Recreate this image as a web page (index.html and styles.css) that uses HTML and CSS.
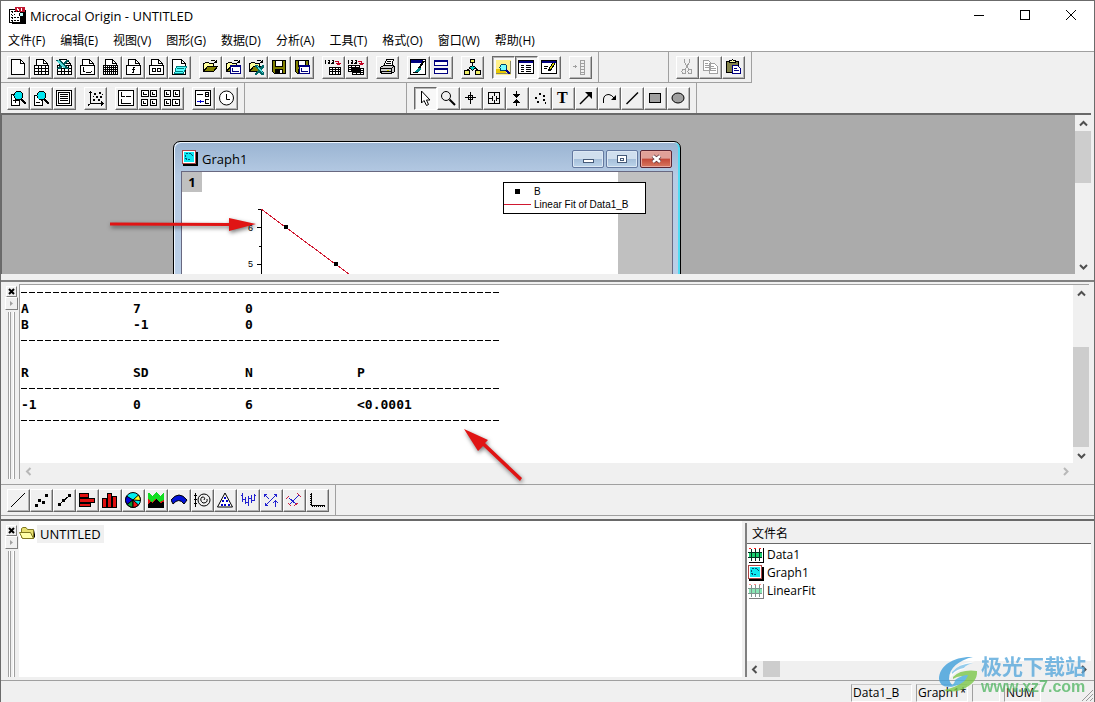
FILE: index.html
```html
<!DOCTYPE html>
<html lang="zh-CN">
<head>
<meta charset="utf-8">
<title>Microcal Origin - UNTITLED</title>
<link rel="stylesheet" href="styles.css">
</head>
<body>
<svg class="defs" aria-hidden="true">
  <symbol id="page" viewBox="0 0 17 17"><path fill="#fff" d="M3.500 8V.5H10.500L14.500 4.500V8"/><path d="M10.500 .5V4.500H14.500"/></symbol>
  <symbol id="grid" viewBox="0 0 17 17"><path fill="#fff" d="M1.500 6.500H15.500V15.500H1.500ZM1 9.500H16M1 12.500H16M5.500 6V16M8.500 6V16M12.500 6V16"/></symbol>
  <symbol id="frame" viewBox="0 0 17 17"><path fill="#fff" d="M1.500 6.500H15.500V15.500H1.500Z"/></symbol>
  <symbol id="folder" viewBox="0 0 17 17"><path fill="#ffff9c" d="M1.500 12.500V4.500H2.500L3.500 3.500H6.500L7.500 4.500H11.500V7.500H5.500Z"/><path fill="#808000" d="M1.500 12.500L5.500 7.500H15.500L11.500 12.500Z"/><path d="M9 1.500H12.500L14.500 3.500M14.500 1V4M12 3.500H15"/></symbol>
  <symbol id="disk" viewBox="0 0 17 17"><path fill="#808000" d="M1.500 1.500H14.500V14.500H3.500L1.500 12.500Z"/><path fill="#fff" d="M4.500 1.500H11.500V7.500H4.500Z"/><path fill="#000" d="M4.500 10.500H11.500V14.500H4.500Z"/><path class="n" fill="#fff" d="M9 11h2v3h-2z"/></symbol>
  <symbol id="miniplot" viewBox="0 0 17 17"><path fill="#fff" stroke="#000080" d="M5.500 6.500H15.500V14.500H5.500ZM5 7.500H16"/><path stroke="#000080" d="M7.500 9V12.500H14"/></symbol>
  <symbol id="excel" viewBox="0 0 17 17"><path class="n" fill="#005858" d="M0 1h5l2 3 3-3h3l-4 5 4 4H9L7 7 4 10H0l4-4z"/><path stroke="#5dd" stroke-width="2" d="M2 2L9 9"/></symbol>
  <symbol id="lens" viewBox="0 0 17 17"><path stroke-width="2.500" d="M11 9L16 14"/><circle fill="#00e5f0" cx="8.500" cy="5.500" r="4.500"/></symbol>
  <symbol id="table" viewBox="0 0 17 17"><path class="n" fill="#fff" d="M0 0h15v15H0z"/><path stroke="#f22" stroke-dasharray="2 3" d="M1 1.500H14"/><path class="n" fill="#18d070" d="M1 6h13v4H1z"/><path d="M0 5.500H14M0 10.500H14M3.500 2V14M7.500 2V14M11.500 2V14" stroke="#003020"/><path d="M1 15.500H15.500V1"/></symbol>
  <symbol id="plot" viewBox="0 0 17 17"><path class="n" d="M1 2h15v14H1z" fill="#000"/><path fill="#fff" stroke="#a44" d="M.5 .5H13.500V13.500H.5Z"/><path class="n" fill="#10e8f0" d="M2 2h10v10H2z"/><path stroke="#057" stroke-dasharray="2 1" d="M4 3.500H9L11.500 6.500M3.500 5V8L5 9.500H9"/></symbol>
</svg>
<div class="window">
  <header class="titlebar">
    <svg class="i" viewBox="0 0 17 17"><path class="n" fill="#000" d="M3 3h14v14H3z"/><path fill="#fff" d="M.5 2.500H11.500V15.500H.5Z"/><path class="n" fill="#c01830" d="M6 0h10v5H6z"/><path stroke="#fff" d="M8 1L10 4M12 1V4"/><path stroke-dasharray="2 1" d="M2 4.500H10M2 10.500H10M2 13.500H11"/><path stroke-dasharray="1 2" d="M2 7.500H8M3.500 5V15"/><circle fill="#bff" cx="12.500" cy="7.500" r="2"/></svg>
    <h1>Microcal Origin - UNTITLED</h1>
    <div class="caption">
      <button aria-label="最小化"><svg class="i" viewBox="0 0 17 17"><path d="M3 8.500H13"/></svg></button>
      <button aria-label="最大化"><svg class="i" viewBox="0 0 17 17"><path d="M3.500 3.500H12.500V12.500H3.500Z"/></svg></button>
      <button aria-label="关闭"><svg class="i smooth" viewBox="0 0 17 17"><path d="M3 3L13 13M13 3L3 13"/></svg></button>
    </div>
  </header>
  <nav class="menu">
    <button>文件(F)</button><button>编辑(E)</button><button>视图(V)</button><button>图形(G)</button><button>数据(D)</button><button>分析(A)</button><button>工具(T)</button><button>格式(O)</button><button>窗口(W)</button><button>帮助(H)</button>
  </nav>

  <div class="bars">
    <div class="bar lined">
      <div class="group">
        <button class="tb" aria-label="New"><svg class="i" viewBox="0 0 17 17"><path fill="#fff" d="M1.500 .5H10.500L14.500 4.500V15.500H1.500Z"/><path d="M10.500 .5V4.500H14.500"/></svg></button>
        <button class="tb" aria-label="New worksheet"><svg class="i"><use href="#page"/><use href="#grid"/></svg></button>
        <button class="tb" aria-label="New Excel"><svg class="i"><use href="#page"/><use href="#grid"/><use href="#excel"/></svg></button>
        <button class="tb" aria-label="New graph"><svg class="i"><use href="#page"/><use href="#frame"/><path d="M4.500 8V12.500H6M7 13.500H12M12.500 12V13"/></svg></button>
        <button class="tb" aria-label="New matrix"><svg class="i"><use href="#page"/><path fill="#fff" d="M1.500 6.500H15.500V15.500H1.500ZM3.500 6V16M5.500 6V16M7.500 6V16M9.500 6V16M11.500 6V16M13.500 6V16M1 8.500H16M1 10.500H16M1 12.500H16"/></svg></button>
        <button class="tb" aria-label="New function"><svg class="i"><use href="#page"/><use href="#frame"/><path d="M10 8.500H8.500V13.500H7M7 10.500H10"/></svg></button>
        <button class="tb" aria-label="New layout"><svg class="i"><use href="#page"/><use href="#frame"/><path d="M4.500 9.500H7.500V12.500H4.500ZM9.500 9.500H12.500V12.500H9.500Z"/></svg></button>
        <button class="tb" aria-label="New notes"><svg class="i"><path fill="#fff" d="M1.500 .5H10.500L14.500 4.500V15.500H1.500Z"/><path d="M10.500 .5V4.500H14.500"/><path fill="#5ff" stroke="#008080" d="M5.500 7.500H15.500L12.500 14.500H3.500ZM6 9.500H13M5 12.500H12"/></svg></button>
        <i class="gap"></i>
        <button class="tb" aria-label="Open"><svg class="i"><use href="#folder"/></svg></button>
        <button class="tb" aria-label="Open template"><svg class="i"><use href="#folder"/><use href="#miniplot"/></svg></button>
        <button class="tb" aria-label="Open Excel"><svg class="i"><use href="#folder"/><path class="n" fill="#006868" d="M7 6h3l2 3 2-3h2v2l-3 3 3 3v2h-3l-2-3-2 3H7v-2l3-3-3-3z"/><path stroke="#5dd" d="M9 7L15 14"/></svg></button>
        <button class="tb" aria-label="Save"><svg class="i"><use href="#disk"/></svg></button>
        <button class="tb" aria-label="Save template"><svg class="i"><use href="#disk"/><use href="#miniplot"/></svg></button>
        <i class="gap"></i>
        <button class="tb" aria-label="Import ASCII"><svg class="i" viewBox="0 0 17 17"><path d="M.5 1V5M2.500 1.500H5M4.500 1V3.500H3V5M3 4.500H5M6.500 1.500H8.500V4.500H6M7 3.500H8"/><path fill="#fff" d="M4.500 8.500H15.500V15.500H4.500ZM4 10.500H16M4 12.500H16M7.500 8V16M10.500 8V16M13.500 8V16"/><path stroke="#c00020" d="M10 2.500H13.500V6M11 4.500H16M12 5.500H15"/></svg></button>
        <button class="tb" aria-label="Import multiple"><svg class="i" viewBox="0 0 17 17"><path d="M.5 1V5M2.500 1.500H5M4.500 1V3.500H3V5M3 4.500H5M6.500 1.500H8.500V4.500H6M7 3.500H8"/><path fill="#fff" d="M.5 6.500H11.500V12.500H.5ZM0 8.500H12M0 10.500H12M3.500 6V13M7.500 6V13M4.500 9.500H15.500V15.500H4.500ZM4 11.500H16M4 13.500H16M8.500 9V16M12.500 9V16"/><path stroke="#c00020" d="M10 2.500H13.500V6M11 4.500H16M12 5.500H15"/></svg></button>
        <i class="gap"></i>
        <button class="tb" aria-label="Print"><svg class="i" viewBox="0 0 17 17"><path fill="#fff" d="M4.500 7.500L7.500 .5H14.500L12.500 7.500"/><path d="M8 2.500H12M7 4.500H12"/><path fill="#ccc" d="M1.500 8.500L4.500 6.500H14.500L15.500 8.500V12.500L12.500 14.500H2.500L1.500 12.500Z"/><path d="M2 9.500H12L15 7.500M12.500 9V14M2 12.500H12"/><path stroke="#cc0" d="M8 11.500H10"/></svg></button>
        <i class="gap"></i>
        <button class="tb" aria-label="Refresh"><svg class="i" viewBox="0 0 17 17"><path fill="#fff" d="M.5 .5H15.500V15.500H.5Z"/><path class="n" fill="#000080" d="M1 1h12v3H1z"/><path class="n" fill="#088" d="M5 14l1-3 3-3 2 2-2 3z"/><path stroke-width="2" d="M9 9L14 2"/><path d="M3 13.500H8"/></svg></button>
        <button class="tb" aria-label="Duplicate"><svg class="i" viewBox="0 0 17 17"><path fill="#fff" stroke="#000080" d="M1.500 1.500H14.500V6.500H1.500ZM1 2.500H15M1.500 9.500H14.500V14.500H1.500ZM1 10.500H15"/></svg></button>
        <i class="gap"></i>
        <button class="tb" aria-label="Project explorer"><svg class="i" viewBox="0 0 17 17"><path d="M8.500 4V7L3.500 11M8.500 7L14 11M8.500 7V12"/><path fill="#ee6" d="M6.500 .5H10.500V3.500H6.500ZM.5 11.500H5.500V15.500H.5ZM11.500 11.500H16.500V15.500H11.500Z"/><path fill="#0cc" d="M8.500 6.500L11.500 8.500 8.500 11.500 5.500 8.500Z"/></svg></button>
        <i class="gap"></i>
        <button class="tb on" aria-label="Results log"><svg class="i" viewBox="0 0 17 17"><path class="n" fill="#fff08a" d="M1 1h15v15H1z"/><path class="n" fill="#e8c800" d="M1 10h10v4H1z"/><path d="M1 14.500H15.500V2" stroke="#886"/><circle fill="#7ff" stroke="#046" cx="8.500" cy="8.500" r="3.500"/><path stroke-width="2" stroke="#000080" d="M11 11L15 15"/></svg></button>
        <button class="tb on" aria-label="Script window"><svg class="i" viewBox="0 0 17 17"><path fill="#fff" d="M.5 1.500H15.500V14.500H.5Z"/><path class="n" fill="#000080" d="M1 2h14v2H1z"/><path d="M3 6.500H6M8 6.500H13M3 8.500H6M8 8.500H13M3 10.500H6M8 10.500H13M3 12.500H6M8 12.500H13"/></svg></button>
        <button class="tb" aria-label="Code editor"><svg class="i" viewBox="0 0 17 17"><path fill="#fff" d="M.5 1.500H15.500V14.500H.5Z"/><path class="n" fill="#000080" d="M1 2h14v2H1z"/><path d="M3 7.500H7M3 9.500H6"/><path stroke-width="3" d="M8 12L13 4"/><path stroke="#dd0" d="M9 10L13 4"/></svg></button>
        <i class="gap"></i>
        <button class="tb" aria-label="Add column" disabled><svg class="i dim" viewBox="0 0 17 17"><path d="M1 7.500H5M3.500 6V9M8.500 1.500H12.500V15.500H8.500ZM8 4.500H13M8 7.500H13M8 10.500H13M8 13.500H13"/></svg></button>
      </div>
      <div class="group apart-wide">
        <button class="tb" aria-label="Cut" disabled><svg class="i dim" viewBox="0 0 17 17"><path d="M5.500 0V3L9.500 10M10.500 0V3L6.500 10"/><circle cx="5" cy="12.500" r="2"/><circle cx="11" cy="12.500" r="2"/></svg></button>
        <button class="tb" aria-label="Copy" disabled><svg class="i dim" viewBox="0 0 17 17"><path fill="#fff" d="M1.500 1.500H6.500L8.500 3.500V11.500H1.500ZM3 4.500H6M3 6.500H7M3 8.500H7M7.500 4.500H12.500L15.500 7.500V14.500H7.500ZM9 7.500H12M9 9.500H14M9 11.500H14"/></svg></button>
        <button class="tb" aria-label="Paste"><svg class="i" viewBox="0 0 17 17"><path fill="#84844a" d="M1.500 2.500H13.500V13.500H1.500Z"/><path fill="#ffa" d="M4.500 3.500V1.500H6.500L7.500 .5 8.500 1.500H10.500V3.500Z"/><path fill="#fff" stroke="#000080" d="M7.500 6.500H12.500L15.500 9.500V14.500H7.500ZM9 9.500H12M9 11.500H14"/></svg></button>
      </div>
    </div>
    <div class="bar">
      <div class="group">
        <button class="tb" aria-label="Zoom in"><svg class="i"><path fill="#fff" d="M1.500 4.500H9.500V15.500H1.500Z"/><use href="#lens"/><path d="M3 10.500H8M5.500 8V13"/></svg></button>
        <button class="tb" aria-label="Zoom out"><svg class="i"><path fill="#fff" d="M1.500 5.500H9.500V15.500H1.500ZM3 12.500H7"/><use href="#lens"/></svg></button>
        <button class="tb" aria-label="Whole page"><svg class="i" viewBox="0 0 17 17"><path fill="#fff" d="M.5 .5H15.500V15.500H.5Z"/><path d="M2.500 2.500H13.500V13.500H2.500ZM4 4.500H12M4 6.500H12M4 8.500H12M4 10.500H12"/></svg></button>
        <i class="gap"></i>
        <button class="tb" aria-label="Rescale"><svg class="i" viewBox="0 0 17 17"><path d="M3.500 1V13.500H16M1.500 3.500L3.500 1.500 5.500 3.500M14 11.500L16 13.500 14 15.500M1 15.500L4 13"/><path class="n" fill="#000" d="M7 3h2v2H7zM12 2h2v2h-2zM9 6h2v2H9zM13 6h2v2h-2zM6 9h2v2H6zM11 9h2v2h-2zM15 4h1v1h-1zM6 6h1v1H6z"/></svg></button>
        <i class="gap"></i>
        <button class="tb" aria-label="Two layers"><svg class="i" viewBox="0 0 17 17"><path fill="#fff" d="M.5 .5H15.500V15.500H.5Z"/><path d="M3.500 2V6.500H7M8 6.500H13M3.500 9V13.500H13"/></svg></button>
        <button class="tb" aria-label="Four layers"><svg class="i" viewBox="0 0 17 17"><path fill="#fff" d="M.5 .5H7.500V6.500H.5ZM9.500 .5H15.500V6.500H9.500ZM.5 9.500H6.500V15.500H.5ZM9.500 9.500H15.500V15.500H9.500Z"/><path d="M2.500 2V4.500H6M11.500 2V4.500H14M2.500 11V13.500H5M11.500 11V13.500H14"/></svg></button>
        <button class="tb" aria-label="Extract layers"><svg class="i" viewBox="0 0 17 17"><path fill="#fff" d="M.5 .5H6.500V6.500H.5ZM9.500 .5H15.500V6.500H9.500ZM.5 9.500H6.500V15.500H.5ZM8.500 9.500H15.500V15.500H8.500Z"/><path d="M2.500 2V4.500H5M11.500 2V4.500H14M2.500 11V13.500H5M11.500 11V13.500H14"/></svg></button>
        <i class="gap"></i>
        <button class="tb" aria-label="New legend"><svg class="i" viewBox="0 0 17 17"><path fill="#fff" d="M.5 .5H15.500V15.500H.5Z"/><path d="M2 4.500H8M10.500 2V6.500H13.500V2.500H10M10 4.500H14M14 9.500H10.500V13.500H14"/><path stroke="#00c" d="M2 11.500H9M5.500 10V13"/></svg></button>
        <button class="tb" aria-label="Date and time"><svg class="i smooth" viewBox="0 0 17 17"><circle fill="#fff" cx="8.500" cy="8" r="7"/><path d="M8.500 4V9.500H12"/></svg></button>
      </div>
      <div class="group apart-tools">
        <button class="tb on" aria-label="Pointer"><svg class="i smooth" viewBox="0 0 17 17"><path fill="#fff" d="M4.500 1V13L7 10.500 9.500 15.500 11.500 14.500 9.500 10H13Z"/></svg></button>
        <button class="tb" aria-label="Zoom"><svg class="i smooth" viewBox="0 0 17 17"><circle cx="6" cy="6" r="4.500"/><path stroke-width="2" d="M9.500 9.500L15 15"/></svg></button>
        <button class="tb" aria-label="Screen reader"><svg class="i" viewBox="0 0 17 17"><path d="M2 7.500H13M7.500 2V14M5.500 5.500H9.500V9.500H5.500Z"/></svg></button>
        <button class="tb" aria-label="Data reader"><svg class="i" viewBox="0 0 17 17"><path d="M2.500 2.500H13.500V13.500H2.500ZM2 8.500H6M10 8.500H14M8.500 3V6M8.500 10V14M6.500 6V11M10.500 6V11"/></svg></button>
        <button class="tb" aria-label="Data selector"><svg class="i" viewBox="0 0 17 17"><path class="n" fill="#000" d="M4 4h7L7.500 8zM4 13h7L7.500 9z"/><path d="M7.500 1V5M7.500 12V16"/></svg></button>
        <button class="tb" aria-label="Draw data"><svg class="i" viewBox="0 0 17 17"><path class="n" fill="#000" d="M7 3h2v2H7zM3 7h2v2H3zM5 11h2v2H5zM11 5h2v2h-2zM11 9h2v2h-2zM13 12h1v2h-1z"/></svg></button>
        <button class="tb" aria-label="Text"><svg class="i" viewBox="0 0 17 17"><text class="tool-letter" x="2" y="13">T</text></svg></button>
        <button class="tb" aria-label="Arrow"><svg class="i smooth" viewBox="0 0 17 17"><path stroke-width="1.500" d="M2 14L11 5"/><path class="n" fill="#000" d="M7 2h7v7z"/></svg></button>
        <button class="tb" aria-label="Curved arrow"><svg class="i smooth" viewBox="0 0 17 17"><path d="M2.500 13V9Q3 4.500 8 4.500Q11 5 13 8"/><path class="n" fill="#000" d="M15 5v5h-5z"/></svg></button>
        <button class="tb" aria-label="Line"><svg class="i smooth" viewBox="0 0 17 17"><path stroke-width="1.500" d="M2.500 14L14 2.500"/></svg></button>
        <button class="tb" aria-label="Rectangle"><svg class="i" viewBox="0 0 17 17"><path fill="#a0a0a0" d="M2.500 3.500H13.500V12.500H2.500Z"/></svg></button>
        <button class="tb" aria-label="Circle"><svg class="i smooth" viewBox="0 0 17 17"><ellipse fill="#a0a0a0" cx="8" cy="8" rx="6" ry="5"/></svg></button>
      </div>
    </div>
  </div>

  <main class="workspace">
    <div class="canvas">
      <section class="graph">
        <header class="graph-title">
          <svg class="i"><use href="#plot"/></svg>
          <h2>Graph1</h2>
          <button class="aero" aria-label="Minimize graph"><svg class="i" viewBox="0 0 17 17"><path fill="#fff" stroke="#455a78" d="M3.500 8.500H13.500V11.500H3.500Z"/></svg></button>
          <button class="aero" aria-label="Maximize graph"><svg class="i" viewBox="0 0 17 17"><path fill="#fff" stroke="#455a78" d="M3.500 4.500H12.500V11.500H3.500ZM6.500 7.500H9.500V9.500H6.500Z"/></svg></button>
          <button class="aero red" aria-label="Close graph"><svg class="i smooth" viewBox="0 0 17 17"><path stroke="#5b3038" stroke-width="4" d="M5 5L12 11M12 5L5 11"/><path stroke="#fff" stroke-width="2.500" d="M5 5L12 11M12 5L5 11"/></svg></button>
        </header>
        <div class="graph-body">
          <div class="sheet">
            <span class="layer">1</span>
            <svg class="chart" viewBox="0 0 437 160" width="437" height="160"><path class="axis" d="M79.500 37V160M76 37.500H79M75 55.500H79M77 74.500H79M75 92.500H79"/><path class="fit" d="M79 37L179 111"/><path class="dots" d="M102 53h4v4h-4zM152 90h4v4h-4z"/><text x="66" y="59">6</text><text x="66" y="95">5</text></svg>
          </div>
          <div class="legend">
            <i class="key dot"></i><span>B</span>
            <i class="key line"></i><span>Linear Fit of Data1_B</span>
          </div>
        </div>
      </section>
      <svg class="callout first" viewBox="0 0 160 30"><path d="M3 11.500L122 12V7L149 13 122 20V15L3 14.500Z"/></svg>
    </div>
    <div class="vscroll">
      <button aria-label="Up"><svg viewBox="0 0 9 9"><path d="M1 6.500L4.500 3 8 6.500"/></svg></button><i class="thumb short"></i><i class="space"></i><button aria-label="Down"><svg viewBox="0 0 9 9"><path d="M1 3L4.500 6.500 8 3"/></svg></button>
    </div>
  </main>

  <section class="log dock">
    <div class="grip"><button class="x" aria-label="Close log"><svg viewBox="0 0 9 9"><path d="M2 2L7 7M7 2L2 7"/></svg></button><button class="pin" aria-label="Expand log"><svg viewBox="0 0 9 9"><path class="tri" d="M3 2L6 4.500 3 7Z"/></svg></button><i class="rails"></i></div>
    <div class="log-view">
      <div class="log-main">
        <div class="results">
          <hr>
          <table>
            <tr><td>A</td><td>7</td><td>0</td><td></td></tr>
            <tr><td>B</td><td>-1</td><td>0</td><td></td></tr>
          </table>
          <hr>
          <br>
          <table><tr><td>R</td><td>SD</td><td>N</td><td>P</td></tr></table>
          <hr>
          <table><tr><td>-1</td><td>0</td><td>6</td><td>&lt;0.0001</td></tr></table>
          <hr>
        </div>
        <div class="vscroll">
          <button aria-label="Up"><svg viewBox="0 0 9 9"><path d="M1 6.500L4.500 3 8 6.500"/></svg></button><i class="space upper"></i><i class="thumb tall"></i><button aria-label="Down"><svg viewBox="0 0 9 9"><path d="M1 3L4.500 6.500 8 3"/></svg></button>
        </div>
      </div>
      <div class="hscroll off"><button aria-label="Left"><svg viewBox="0 0 9 9"><path d="M6.500 1L3 4.500 6.500 8"/></svg></button><i class="space"></i><button aria-label="Right"><svg viewBox="0 0 9 9"><path d="M3 1L6.500 4.500 3 8"/></svg></button><i class="corner"></i></div>
    </div>
    <svg class="callout second" viewBox="0 0 70 64"><path d="M3 3L27 14 24 17 61 52 59 55 22 20 17 25Z"/></svg>
  </section>

  <div class="plots">
    <div class="group">
      <button class="tb" aria-label="Line plot"><svg class="i smooth" viewBox="0 0 17 17"><path d="M1 15L15 1"/></svg></button>
      <button class="tb" aria-label="Scatter"><svg class="i" viewBox="0 0 17 17"><path class="n" fill="#000" d="M2 12h3v3H2zM5 7h3v3H5zM9 9h3v3H9zM12 2h3v3h-3z"/></svg></button>
      <button class="tb" aria-label="Line and symbol"><svg class="i" viewBox="0 0 17 17"><path d="M3 13L14 3"/><path class="n" fill="#000" d="M2 11h3v3H2zM6 7h3v3H6zM12 2h3v3h-3z"/></svg></button>
      <button class="tb" aria-label="Bar"><svg class="i" viewBox="0 0 17 17"><path fill="#e01010" d="M.5 1.500H9.500V5.500H.5ZM.5 6.500H15.500V10.500H.5ZM.5 11.500H11.500V14.500H.5Z"/></svg></button>
      <button class="tb" aria-label="Column"><svg class="i" viewBox="0 0 17 17"><path fill="#e01010" d="M.5 6.500H4.500V15.500H.5ZM5.500 1.500H9.500V15.500H5.500ZM10.500 4.500H14.500V15.500H10.500Z"/></svg></button>
      <button class="tb" aria-label="Pie"><svg class="i smooth" viewBox="0 0 17 17"><circle fill="#0ee" cx="8" cy="8" r="7.500"/><path fill="#00d" d="M8 8L1.500 4Q-1 9 2 12.500Z"/><path fill="#093" d="M8 8L2 12.500Q5 15.500 8 15.500Z"/><path fill="#e11" d="M8 8V15.500Q11 15.500 13.500 13Z"/><path fill="#ff2" d="M8 8L13.500 3Q15.500 6 15.500 8.500Z"/></svg></button>
      <button class="tb" aria-label="Area"><svg class="i" viewBox="0 0 17 17"><path class="n" fill="#e01010" d="M0 5h16v11H0z"/><path class="n" fill="#f0f0f0" d="M0 0h16v4H0z"/><path class="n" fill="#1d2" d="M0 1l1 0 3 3 4-4 4 4 3-3h1v7l-4 2-4-3-4 3-4-3z"/><path class="n" fill="#000" d="M0 12l3-2 2 1 3-4 4 4 4-1v6H0z"/></svg></button>
      <button class="tb" aria-label="Fill area"><svg class="i smooth" viewBox="0 0 17 17"><path fill="#0010d8" d="M0 8Q8-2 16 8L13 12Q8 5 2 12Z"/></svg></button>
      <button class="tb" aria-label="Polar"><svg class="i smooth" viewBox="0 0 17 17"><path d="M1.500 1V15M0 3.500H3M0 7.500H3M0 11.500H3"/><circle cx="10" cy="8" r="6"/><path d="M10 8Q12 5 8 5Q5 8 9 11Q14 11 13 7"/></svg></button>
      <button class="tb" aria-label="Ternary"><svg class="i smooth" viewBox="0 0 17 17"><path fill="#fff" d="M8 1L15.500 15H.5Z"/><path class="n" fill="#00c" d="M7 5h2v2H7zM5 8h2v2H5zM9 8h2v2H9zM4 12h2v2H4zM7 12h2v2H7zM11 12h2v2h-2z"/></svg></button>
      <button class="tb" aria-label="High low close"><svg class="i" viewBox="0 0 17 17"><path stroke="#2020d0" d="M2.500 1V10M1 3.500H3M5.500 5V12M3 7.500H5M8.500 4V14M6 10.500H8M11.500 3V11M9 6.500H11M14.500 2V9M12 8.500H14M15 3.500H16"/></svg></button>
      <button class="tb" aria-label="Vector"><svg class="i" viewBox="0 0 17 17"><path stroke="#2020d0" d="M1 2L6 7M1.500 2V5M1 2.500H4M14 2L2 14M14 2.500H11M13.500 2V5M2.500 14V11M2 13.500H5M12.500 15V9M10 11L12.500 9L15 11"/></svg></button>
      <button class="tb" aria-label="Vector XYXY"><svg class="i" viewBox="0 0 17 17"><path stroke="#2020d0" d="M3 13L13 3M3 6L10 12"/><path stroke="#d02040" d="M0 7L3 4M8 14L12 11M2 11L5 14M11 1L15 5"/></svg></button>
      <button class="tb" aria-label="Template"><svg class="i" viewBox="0 0 17 17"><path d="M2.500 1V13.500H16"/><path stroke-dasharray="1 1" d="M3 14.500H16M1.500 2V14"/></svg></button>
    </div>
  </div>

  <section class="project dock">
    <div class="grip"><button class="x" aria-label="Close explorer"><svg viewBox="0 0 9 9"><path d="M2 2L7 7M7 2L2 7"/></svg></button><button class="pin" aria-label="Expand explorer"><svg viewBox="0 0 9 9"><path class="tri" d="M3 2L6 4.500 3 7Z"/></svg></button><i class="rails"></i></div>
    <div class="tree">
      <svg class="i smooth" viewBox="0 0 17 17"><path class="n" fill="#000" d="M3 14H14L16 12V5L14 14Z"/><path fill="#e8e070" stroke="#807820" d="M2.500 12.500V3.500L4 2.500H7L8.500 4.500H14.500V13.500H4Z"/><path fill="#ffffa8" stroke="#807820" d="M3.500 13.500L.5 7.500H11.500L14.500 13.500Z"/></svg>
      <span>UNTITLED</span>
    </div>
    <div class="files">
      <div class="files-head">文件名</div>
      <ul>
        <li><svg class="i"><use href="#table"/></svg>Data1</li>
        <li><svg class="i"><use href="#plot"/></svg>Graph1</li>
        <li><svg class="i faded"><use href="#table"/></svg>LinearFit</li>
      </ul>
      <div class="hscroll"><button aria-label="Left"><svg viewBox="0 0 9 9"><path d="M6.500 1L3 4.500 6.500 8"/></svg></button><i class="thumb"></i><i class="space"></i><button aria-label="Right"><svg viewBox="0 0 9 9"><path d="M3 1L6.500 4.500 3 8"/></svg></button></div>
    </div>
  </section>

  <footer class="status">
    <span class="s-data">Data1_B</span><span class="s-graph">Graph1*</span><span class="s-blank"></span><span class="s-num">NUM</span>
    <svg class="i smooth" viewBox="0 0 17 17"><path stroke="#999" d="M5 16L16 5M9 16L16 9M13 16L16 13"/></svg>
  </footer>

  <div class="watermark">
    <svg viewBox="0 0 44 38"><path fill="#3f9fdc" d="M2 24C2 10 18 1 36 2C22 5 12 13 12 24Q13 29 17 31Q3 34 2 24Z"/><path fill="#fff" d="M13 20Q20 8 38 6Q30 9 27 14Q20 15 13 23Z"/><path fill="#7fc4ec" d="M15 17Q21 9 36 8Q29 10 27 13Q20 14 15 19Z"/><path fill="#7cc84a" d="M16 22Q24 14 40 16Q41 28 24 35Q14 38 6 35Q24 32 28 22Q22 20 16 24Z"/><path fill="#4aaee0" d="M18 25Q25 20 31 20Q28 30 12 32Q18 29 18 25Z"/></svg>
    <div><b>极光下载站</b><em>www.xz7.com</em></div>
  </div>
</div>
</body>
</html>
```
FILE: styles.css
```css
* { box-sizing: border-box; }
body {
  margin: 0;
  background: #f0f0f0;
  color: #000;
  font: 13px/18px "Open Sans", "Noto Sans CJK SC", sans-serif;
}
h1, h2 { margin: 0; font: inherit; }
button {
  display: grid;
  place-items: center;
  margin: 0;
  padding: 0;
  border: 0;
  background: none;
  color: inherit;
  font: inherit;
}
.defs { position: absolute; width: 0; height: 0; }
.window {
  position: relative;
  display: flex;
  flex-direction: column;
  min-height: 100vh;
  border: 1px solid #6b6b6b;
  overflow: hidden;
}
.i {
  flex: none;
  display: block;
  width: 17px;
  height: 17px;
  fill: none;
  stroke: #000;
  shape-rendering: crispEdges;
}
.smooth { shape-rendering: auto; }
.n { stroke: none; }
.dim { stroke: #a0a0a0; }
.faded { opacity: .5; }

.titlebar {
  display: flex;
  align-items: center;
  gap: 4px;
  height: 29px;
  padding-left: 8px;
  background: #fff;
}
.caption { display: flex; margin-left: auto; }
.caption button { width: 46px; height: 29px; }
.menu {
  display: flex;
  gap: 15px;
  padding: 2px 7px 1px;
  border-bottom: 1px solid #a0a0a0;
  background: #fff;
  font-size: 12px;
}
.menu button { height: 18px; }

.bar { display: flex; }
.bar .group { border-right: 1px solid #a0a0a0; }
.lined .group { border-bottom: 1px solid #a0a0a0; }
.lined { position: relative; }
.group { display: flex; padding: 4px 6px 3px; }
.bar .apart-wide, .bar .apart-tools { padding-left: 7px; border-left: 1px solid #a0a0a0; }
.apart-wide { margin-left: 69px; }
.lined .group:first-child::after {
  content: "";
  position: absolute;
  left: 598px;
  bottom: 0;
  width: 70px;
  border-bottom: 1px solid #a0a0a0;
}
.apart-tools { margin-left: 161px; }
.gap { width: 8px; }
.tb {
  width: 23px;
  height: 23px;
  border: 1px solid;
  border-color: #fff #696969 #696969 #fff;
  box-shadow: inset -1px -1px #b4b4b4;
  background: #f0f0f0;
}
.tb.on {
  border-color: #696969 #fff #fff #696969;
  box-shadow: inset 1px 1px #b4b4b4;
  background: #f8f8f8;
}
.tool-letter { fill: #000; stroke: none; font: bold 16px "Liberation Serif", serif; }

.workspace {
  flex: 161 1 161px;
  display: flex;
  min-height: 120px;
  margin-right: 3px;
  border-top: 2px solid #696969;
  border-left: 1px solid #696969;
}
.canvas { position: relative; flex: 1; overflow: hidden; background: #ababab; }
.graph {
  position: absolute;
  left: 171px;
  top: 26px;
  width: 508px;
  height: 340px;
  padding: 0 7px;
  border: 1px solid #000;
  border-radius: 7px 7px 0 0;
  background: linear-gradient(#9ab4d2, #b6cbe4 34px, #c2d6ee);
  box-shadow: inset 1px 1px #eef6ff, inset -2px 0 #50dcf4;
}
.graph-title { display: flex; align-items: center; height: 29px; padding-top: 4px; }
.graph-title h2 { flex: 1; padding-left: 3px; }
.graph-title > .i { margin-left: 1px; }
.aero {
  width: 32px;
  height: 18px;
  margin-right: 2px;
  border: 1px solid #6479a0;
  border-radius: 2px;
  background: linear-gradient(#d0dfee 48%, #a6bfda 52%, #bcd4ea);
  box-shadow: inset 0 0 0 1px #dce8f4;
}
.aero.red {
  margin-right: 1px;
  border-color: #5a2634;
  background: linear-gradient(#e0a098 45%, #c24838 50%, #d87860);
  box-shadow: inset 0 0 0 1px #e8a8a0;
}
.graph-body {
  position: relative;
  height: 300px;
  border: 1px solid #686880;
  background: #c0c0c0;
}
.sheet { width: 436px; height: 100%; background: #fff; }
.layer {
  position: absolute;
  width: 20px;
  height: 20px;
  background: #c0c0c0;
  font: bold 13px/20px "Open Sans", sans-serif;
  text-align: center;
}
.chart { display: block; shape-rendering: crispEdges; font: 9px "Liberation Sans", sans-serif; }
.axis { fill: none; stroke: #000; }
.fit { fill: none; stroke: #d01830; }
.legend {
  position: absolute;
  left: 321px;
  top: 10px;
  display: grid;
  grid-template-columns: 27px auto;
  column-gap: 3px;
  align-items: center;
  width: 143px;
  padding: 2px 0;
  border: 1px solid #000;
  background: #fff;
  font: 10px/13px "Liberation Sans", sans-serif;
}
.key.dot { width: 5px; height: 5px; margin-left: 11px; background: #000; }
.key.line { height: 1px; background: #d01830; }
.callout {
  position: absolute;
  fill: #e01414;
  filter: drop-shadow(1px 2px 2px #0008);
}
.first { left: 105px; top: 96px; width: 160px; height: 30px; }
.second { left: 460px; top: 144px; width: 70px; height: 64px; }

.vscroll, .hscroll { display: flex; background: #f0f0f0; }
.vscroll { flex-direction: column; width: 16px; }
.hscroll { height: 16px; }
.vscroll button, .hscroll button { flex: none; width: 16px; height: 16px; }
.vscroll svg, .hscroll svg, .grip svg { width: 9px; height: 9px; fill: none; stroke: #505050; stroke-width: 2; }
.hscroll.off svg { stroke: #b8b8b8; }
.thumb { background: #cdcdcd; }
.space { flex: 1; }
.short { height: 52px; }
.upper { flex: 45; }
.tall { flex: 99; }
.hscroll .thumb { width: 17px; }
.corner { width: 16px; }

.dock { position: relative; display: flex; }
.grip { display: flex; flex-direction: column; align-items: center; width: 18px; padding: 4px 0 0 3px; }
.grip button {
  width: 11px;
  height: 11px;
  border: 1px solid;
  border-color: #fff #808080 #808080 #fff;
}
.grip .pin { width: 13px; height: 13px; }
.grip .x svg { stroke: #000; stroke-width: 2; }
.grip .tri { fill: #a0a0a0; stroke: none; }
.rails {
  flex: 1;
  width: 7px;
  margin-top: 2px;
  border: solid #a0a0a0;
  border-width: 0 1px;
  background: linear-gradient(90deg, #fff 1px, #a0a0a0 1px, #a0a0a0 2px, #f0f0f0 2px, #f0f0f0 4px, #fff 4px);
}
.log {
  flex: 205 1 205px;
  min-height: 180px;
  margin-top: 6px;
  padding: 0 5px 5px 0;
  border-top: 2px solid #808080;
  border-bottom: 1px solid #a0a0a0;
}
.log-view {
  flex: 1;
  display: flex;
  flex-direction: column;
  margin-top: 2px;
  border-top: 1px solid #a0a0a0;
  border-left: 1px solid #a0a0a0;
}
.log-main { flex: 1; display: flex; background: #fff; }
.results { flex: 1; padding-left: 1px; font: bold 13px/16px "DejaVu Sans Mono", monospace; }
.results table { width: 480px; border-collapse: collapse; table-layout: fixed; }
.results td { width: 112px; padding: 0; height: 16px; }
.results td:last-child { width: 144px; }
.results hr {
  width: 480px;
  height: 1px;
  margin: 7px 0 8px;
  border: 0;
  background: repeating-linear-gradient(90deg, #000 0 6px, #fff 6px 8px);
}
.results hr + br { line-height: 16px; }

.plots { border-bottom: 1px solid #a0a0a0; }
.plots .group { width: max-content; border-right: 1px solid #a0a0a0; }

.project {
  flex: 161 1 161px;
  min-height: 130px;
  margin-top: 3px;
  padding: 0 3px 3px 0;
  border-top: 2px solid #696969;
}
.tree {
  flex: 725;
  display: flex;
  align-items: flex-start;
  gap: 1px;
  padding-top: 4px;
  background: #fff;
}
.tree span { padding: 0 3px; background: #f0f0f0; }
.files {
  flex: 345;
  display: flex;
  flex-direction: column;
  margin: 2px 0 0 3px;
  border-left: 2px solid #808080;
  background: #fff;
  font-size: 12px;
}
.files-head { padding: 2px 5px 0; border-bottom: 1px solid #696969; background: #f0f0f0; line-height: 18px; }
.files ul { flex: 1; margin: 0; padding: 2px 1px; list-style: none; }
.files li { display: flex; align-items: center; gap: 2px; height: 18px; }

.status {
  display: flex;
  align-items: flex-end;
  justify-content: flex-end;
  height: 22px;
  padding-top: 3px;
  border-top: 1px solid #a0a0a0;
  font-size: 12px;
}
.status span {
  height: 18px;
  margin-right: 4px;
  padding-left: 1px;
  border: 1px solid;
  border-color: #c8c8c8 #fff #fff #a0a0a0;
  line-height: 16px;
}
.s-data { width: 61px; }
.s-graph { width: 52px; }
.s-blank { width: 28px; }
.s-num { width: 37px; }
.status .i { margin-left: 32px; }

.watermark {
  position: absolute;
  right: 8px;
  bottom: 6px;
  display: flex;
  align-items: center;
  opacity: .8;
}
.watermark svg { width: 44px; height: 38px; }
.watermark b {
  display: block;
  color: #58a8dc;
  font: bold 21px/26px "Noto Sans CJK SC", sans-serif;
}
.watermark em {
  display: block;
  color: #58b868;
  font: normal bold 16px/18px "Liberation Sans", sans-serif;
}
```
